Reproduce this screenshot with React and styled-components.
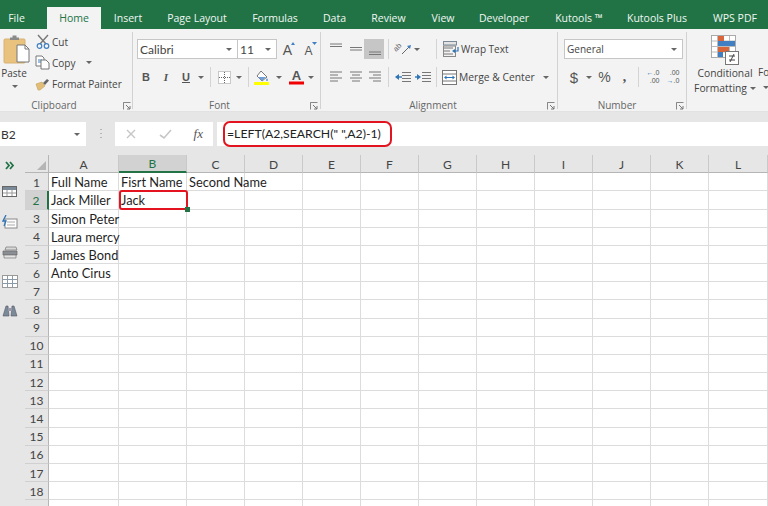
import React from "react";
import styled, { createGlobalStyle } from "styled-components";

const Global = createGlobalStyle`
  html, body { margin: 0; padding: 0; background: #fff; }
  body { font-family: "Open Sans", "Liberation Sans", sans-serif; }
  #root { width: 768px; height: 506px; overflow: hidden; }
`;
const Page = styled.div`width:768px;height:506px;overflow:hidden;display:flex;flex-direction:column;background:#e6e6e6;`;

const TabBar = styled.nav`height:29px;background:#217346;display:flex;align-items:flex-end;flex:none;overflow:hidden;`;
const Tab = styled.div`
  height:22px;line-height:22px;font-size:10.5px;white-space:nowrap;text-align:center;flex:none;
  width:${p=>p.$w}px;margin-left:${p=>p.$ml??0}px;color:${p=>p.$active?"#217346":"#f1f7f3"};background:${p=>p.$active?"#f3f3f3":"transparent"};
`;

const Ribbon = styled.section`height:83px;flex:none;background:#f3f3f3;display:flex;padding-top:3px;box-sizing:border-box;border-bottom:1px solid #e2e2e2;`;
const Group = styled.div`position:relative;flex:none;width:${p=>p.$w}px;height:77px;box-sizing:border-box;display:flex;flex-direction:column;border-right:${p=>p.$last?"none":"1px solid #d2d2d2"};`;
const StylesGroup = styled(Group)`flex-direction:row;`;
const GroupBody = styled.div`flex:1;display:flex;flex-direction:column;gap:8px;padding-top:7px;padding-left:${p=>p.$left??0}px;`;
const GroupLabel = styled.div`height:13px;line-height:13px;margin-bottom:-3px;padding-right:${p=>p.$pr??0}px;font-size:10px;color:#666;text-align:center;`;
const Launcher = styled.svg`position:absolute;right:${p=>p.$r??1}px;bottom:-1px;width:8px;height:8px;`;
const Row = styled.div`display:flex;align-items:center;height:20px;flex:none;margin-left:${p=>p.$ml??0}px;`;
const Cell = styled.div`flex:none;display:flex;align-items:center;justify-content:center;height:20px;width:${p=>p.$w}px;margin-left:${p=>p.$ml??0}px;background:${p=>p.$on?"#c6c6c6":"transparent"};`;
const Glyph = styled(Cell)`color:#555;font-family:${p=>p.$serif?'"Liberation Serif",serif':'"Liberation Sans",sans-serif'};font-size:${p=>p.$size??11}px;font-weight:${p=>p.$bold?"bold":"normal"};font-style:${p=>p.$italic?"italic":"normal"};text-decoration:${p=>p.$under?"underline":"none"};`;
const Sep = styled.div`flex:none;width:1px;height:20px;background:#d4d4d4;margin:0 ${p=>p.$m??4}px;`;
const Combo = styled.div`flex:none;box-sizing:border-box;width:${p=>p.$w}px;height:20px;background:#fff;border:1px solid #c6c6c6;margin-left:${p=>p.$join?"-1px":"0"};display:flex;align-items:center;justify-content:space-between;padding:0 5px 0 2px;font-size:${p=>p.$cal?"12px":"10px"};font-family:${p=>p.$cal?'Lato,"Open Sans",sans-serif':'"Open Sans",sans-serif'};color:#444;`;
const Caret = styled.i`display:inline-block;flex:none;width:0;height:0;border-left:3px solid transparent;border-right:3px solid transparent;border-top:3px solid #666;margin-left:${p=>p.$ml??0}px;`;
const ToolText = styled.span`font-size:10px;color:#444;white-space:nowrap;margin-left:${p=>p.$ml??0}px;`;
const MergeText = styled(ToolText)`font-size:10.3px;`;

const Clip = styled.div`display:flex;flex:1;`;
const PasteCol = styled.div`width:33px;flex:none;display:flex;flex-direction:column;align-items:center;padding-top:3px;box-sizing:border-box;`;
const PasteText = styled.span`font-size:10px;color:#444;margin-top:2px;line-height:14px;margin-left:-5px;`;
const PasteCaret = styled(Caret)`margin-top:5px;margin-left:-4px;`;
const ClipTools = styled.div`display:flex;flex-direction:column;padding-left:2px;margin-top:-1px;`;
const ClipTool = styled.div`height:21px;display:flex;align-items:center;gap:2px;`;
const IconSlot = styled.div`width:15px;display:flex;justify-content:center;flex:none;`;

const BigCol = styled.div`width:66px;margin-left:5px;flex:none;display:flex;flex-direction:column;align-items:center;padding-top:3px;`;
const BigText = styled.div`font-size:10.3px;line-height:15px;color:#444;white-space:nowrap;display:flex;align-items:center;gap:3px;`;
const Cond = styled.div`margin-top:1px;display:flex;flex-direction:column;align-items:center;`;
const Clipped = styled.div`padding-top:33px;font-size:10px;line-height:15px;color:#444;display:flex;flex-direction:column;align-items:flex-end;`;
const ClippedCaret = styled(Caret)`margin-top:6px;`;

const FormulaBar = styled.section`height:43px;flex:none;background:#e6e6e6;display:flex;align-items:flex-start;padding-top:10px;box-sizing:border-box;`;
const NameBox = styled.div`width:86px;height:24px;background:#fff;box-sizing:border-box;display:flex;align-items:center;justify-content:space-between;padding:0 6px 0 1px;font:12px Lato,sans-serif;color:#333;flex:none;`;
const Dots = styled.div`width:29px;height:24px;display:flex;justify-content:center;align-items:center;flex:none;`;
const FxBox = styled.div`width:98px;height:24px;background:#fff;flex:none;display:flex;align-items:center;justify-content:space-between;padding:0 10px;box-sizing:border-box;`;
const FxMark = styled.span`font:italic 13px "Liberation Serif",serif;color:#555;`;
const FormulaInput = styled.div`position:relative;flex:1;margin-left:4px;height:24px;background:#fff;font:12.25px/24px Lato,sans-serif;color:#222;padding-left:10px;white-space:pre;`;
const Callout = styled.div`position:absolute;box-sizing:border-box;border:2px solid #e3141f;border-radius:${p=>p.$r}px;left:${p=>p.$x}px;top:${p=>p.$y}px;width:${p=>p.$w}px;height:${p=>p.$h}px;pointer-events:none;`;

const Main = styled.main`flex:1;display:flex;min-height:0;background:#fff;`;
const Side = styled.aside`width:25px;flex:none;background:#e6e6e6;display:flex;flex-direction:column;padding-left:1px;box-sizing:border-box;`;
const SideIcon = styled.div`height:${p=>p.$h}px;width:18px;display:flex;align-items:center;justify-content:center;flex:none;`;
const Sheet = styled.div`position:relative;flex:1;background:#fff;display:grid;grid-template-columns:24px 70px 68px 58px 58px 58px 58px 58px 58px 58px 58px 58px 59px;grid-auto-rows:18.18px;align-content:start;overflow:hidden;`;
const ColHead = styled.div`background:${p=>p.$on?"#d2d2d2":"#e6e6e6"};color:${p=>p.$on?"#217346":"#444"};border-right:1px solid #c9c9c9;border-bottom:${p=>p.$on?"2px solid #217346":"1px solid #b5b5b5"};box-sizing:border-box;padding-top:1px;font:12px Lato,sans-serif;display:flex;align-items:center;justify-content:center;`;
const Corner = styled.div`background:#e6e6e6;border-right:1px solid #b5b5b5;border-bottom:1px solid #b5b5b5;box-sizing:border-box;display:flex;align-items:flex-end;justify-content:flex-end;padding:0 2px 2px 0;`;
const RowHead = styled.div`background:${p=>p.$on?"#d2d2d2":"#e6e6e6"};color:${p=>p.$on?"#217346":"#444"};border-right:${p=>p.$on?"2px solid #217346":"1px solid #b5b5b5"};border-bottom:1px solid #d0d0d0;box-sizing:border-box;padding-top:1px;font:12px Lato,sans-serif;display:flex;align-items:center;justify-content:center;`;
const SheetCell = styled.div`border-right:1px solid #dcdcdc;border-bottom:1px solid #dcdcdc;box-sizing:border-box;font:12.8px Lato,sans-serif;color:#1f1f1f;padding:1px 0 0 2px;display:flex;align-items:center;white-space:nowrap;overflow:visible;`;
const Handle = styled.div`position:absolute;left:160px;top:52px;width:5px;height:5px;background:#217346;`;
const DecStack = styled.span`display:flex;flex-direction:column;align-items:flex-end;font:7px/8.2px "Liberation Sans",sans-serif;color:#555;`;
const DecArrow = styled.b`color:#2e75b6;`;
const DecLine = styled.span`display:block;`;

const Ic = ({w=14,h=14,children}) => <svg width={w} height={h} viewBox={`0 0 ${w} ${h}`} style={{display:"block",flex:"none"}}>{children}</svg>;
const Lines = ({rows}) => <Ic w={16} h={14}>{rows.map((r,i)=><path key={i} d={`M${r[0]} ${r[2]}H${r[1]}`} stroke="#777" strokeWidth="1"/>)}</Ic>;
const LaunchIcon = ({r}) => <Launcher $r={r} viewBox="0 0 8 8"><path d="M.5 3V.5H7.5M.5 .5V7.5" fill="none" stroke="#888"/><path d="M3 3L7 7M7 4V7H4" fill="none" stroke="#777"/></Launcher>;

const tabs=[["File",33,0],["Home",54,14],["Insert",54,0],["Page Layout",84,0],["Formulas",72,0],["Data",47,0],["Review",61,0],["View",48,0],["Developer",74,0],["Kutools ™",76,0],["Kutools Plus",80,0],["WPS PDF",76,0]];
const cols=["A","B","C","D","E","F","G","H","I","J","K","L"];
const data={1:["Full Name","Fisrt Name","Second Name"],2:["Jack Miller","Jack"],3:["Simon Peter"],4:["Laura mercy"],5:["James Bond"],6:["Anto Cirus"]};

const PasteIcon=()=><Ic w={27} h={29}><rect x="1" y="4" width="21" height="24" rx="1" fill="#e9c27e" stroke="#d6b273"/><path d="M7 5V2.5H9.5V0.5H13.5V2.5H16V5z" fill="#8a8a8a"/><path d="M14 10H22L26 14V27H14z" fill="#fff" stroke="#777"/><path d="M22 10V14H26" fill="none" stroke="#777"/></Ic>;
const CutIcon=()=><Ic w={14} h={15}><path d="M2 1L10 10M12 1L4 10" stroke="#777" strokeWidth="1.4"/><circle cx="3.5" cy="12" r="2.3" fill="none" stroke="#3f7fc2" strokeWidth="1.2"/><circle cx="10.5" cy="12" r="2.3" fill="none" stroke="#3f7fc2" strokeWidth="1.2"/></Ic>;
const CopyIcon=()=><Ic w={15} h={15}><path d="M1 1H7L9 3V11H1z" fill="#fff" stroke="#777"/><path d="M3 5H7M3 7H7" stroke="#3f7fc2"/><path d="M6 5H11L14 8V14H6z" fill="#fff" stroke="#777"/></Ic>;
const BrushIcon=()=><Ic w={15} h={14}><path d="M1 7L7 5L10 9L5 13H3z" fill="#e2bd78" stroke="#c69f5c" strokeWidth=".6"/><path d="M8 6L12 2L14 3.5L10 8z" fill="#666"/></Ic>;
const BorderIcon=()=><Ic w={13} h={13}><rect x=".5" y=".5" width="12" height="12" fill="#fff" stroke="#999" strokeDasharray="1 1"/><path d="M6.5 1V12M1 6.5H12" stroke="#666" strokeDasharray="1 1"/></Ic>;
const FillIcon=()=><Ic w={15} h={15}><path d="M7 1L13 7L8 11L3 6z" fill="#fff" stroke="#777"/><path d="M4 7H12L8 11z" fill="#6f9fd4"/><path d="M13 8c1 2 1 3 0 3s-1-1 0-3z" fill="#3f7fc2"/><rect x="0" y="12" width="15" height="3" fill="#ffff00"/></Ic>;
const FontColor=()=><Ic w={15} h={16}><text x="7.5" y="11" textAnchor="middle" fontFamily="Liberation Sans" fontWeight="bold" fontSize="13" fill="#555">A</text><rect x="0" y="12.5" width="15" height="3" fill="#f00000"/></Ic>;
const Grow=({up})=><Ic w={14} h={16}><text x="5.5" y="14" textAnchor="middle" fontFamily="Liberation Sans" fontSize={up?14:12} fill="#555">A</text><path d={up?"M9 4L11 1L13 4z":"M9 1H14L11.5 4z"} fill="#3f7fc2"/></Ic>;
const Orient=()=><Ic w={18} h={18}><text x="0" y="0" transform="translate(2,12) rotate(-45)" fontFamily="Liberation Sans" fontSize="7.5" fill="#666">ab</text><path d="M8 14L15 7" stroke="#666"/><path d="M13 6L17 5L16 9z" fill="#3f7fc2"/></Ic>;
const Indent=({dir})=><Ic w={16} h={12}><path d="M7 1.5H16M7 4.5H16M7 7.5H16M7 10.5H16" stroke="#777"/><path d={dir<0?"M0 6L4 3V9z":"M6 6L2 3V9z"} fill="#2e75b6"/><path d={dir<0?"M3 6H7":"M0 6H3"} stroke="#2e75b6" strokeWidth="1.4"/></Ic>;
const Wrap=()=><Ic w={18} h={16}><rect x=".5" y=".5" width="13" height="3.5" fill="#e3e3e3" stroke="#7a8a99"/><path d="M1 7H10M1 10H7M1 13H10" stroke="#777"/><rect x=".5" y="5" width="12" height="10.5" fill="none" stroke="#888"/><path d="M11 10H15V6" fill="none" stroke="#2e75b6" strokeWidth="1.2"/><path d="M9 10L12 8V12z" fill="#2e75b6"/></Ic>;
const Merge=()=><Ic w={15} h={15}><rect x=".5" y=".5" width="14" height="14" fill="#fff" stroke="#777"/><path d="M1 4H14M1 11H14" stroke="#777"/><path d="M3 7.5H12" stroke="#2e75b6"/><path d="M2 7.5L4.5 5.5V9.5zM13 7.5L10.5 5.5V9.5z" fill="#2e75b6"/></Ic>;
const CF=()=><Ic w={28} h={30}><rect x=".5" y=".5" width="24" height="22" fill="#fff" stroke="#aaa"/><path d="M6.5 1V23M18.5 1V23M1 6H24M1 11.5H24M1 17H24" stroke="#bbb"/><rect x="7" y="1" width="6" height="5" fill="#d9653b"/><rect x="7" y="6" width="17" height="5" fill="#3f7fc2"/><rect x="7" y="12" width="11" height="5" fill="#d9653b"/><rect x="7" y="17" width="5" height="5" fill="#3f7fc2"/><rect x="14.5" y="16.5" width="13" height="13" fill="#fff" stroke="#777"/><path d="M18 21H24M18 25H24M23 19L19 27" stroke="#444" fill="none"/></Ic>;

export default function App(){
  return <Page><Global/>
    <TabBar>
      {tabs.map(([t,w,ml],i)=><Tab key={t} $w={w} $ml={ml} $active={i===1}>{t}</Tab>)}
    </TabBar>
    <Ribbon>
      <Group $w={133}>
        <Clip>
          <PasteCol><PasteIcon/><PasteText>Paste</PasteText><PasteCaret/></PasteCol>
          <ClipTools>
            <ClipTool><IconSlot><CutIcon/></IconSlot><ToolText>Cut</ToolText></ClipTool>
            <ClipTool><IconSlot><CopyIcon/></IconSlot><ToolText>Copy</ToolText><Caret $ml={9}/></ClipTool>
            <ClipTool><IconSlot><BrushIcon/></IconSlot><ToolText>Format Painter</ToolText></ClipTool>
          </ClipTools>
        </Clip>
        <GroupLabel $pr={24}>Clipboard</GroupLabel><LaunchIcon/>
      </Group>
      <Group $w={188}>
        <GroupBody $left={4}>
          <Row>
            <Combo $w={101} $cal>Calibri<Caret/></Combo>
            <Combo $w={40} $join $cal>11<Caret/></Combo>
            <Cell $w={20} $ml={2}><Grow up/></Cell><Cell $w={21}><Grow/></Cell>
          </Row>
          <Row $ml={-1}>
            <Glyph $w={20} $bold>B</Glyph>
            <Glyph $w={20} $serif $bold $italic>I</Glyph>
            <Glyph $w={20} $bold $under>U</Glyph>
            <Cell $w={10}><Caret/></Cell>
            <Sep/>
            <Cell $w={18}><BorderIcon/></Cell>
            <Cell $w={11}><Caret/></Cell>
            <Sep/>
            <Cell $w={16}><FillIcon/></Cell>
            <Cell $w={19}><Caret/></Cell>
            <Cell $w={16}><FontColor/></Cell>
            <Cell $w={13}><Caret/></Cell>
          </Row>
        </GroupBody>
        <GroupLabel $pr={14}>Font</GroupLabel><LaunchIcon r={2}/>
      </Group>
      <Group $w={237}>
        <GroupBody $left={4}>
          <Row>
            <Cell $w={20}><Lines rows={[[3,15,2],[3,15,4.5]]}/></Cell>
            <Cell $w={19}><Lines rows={[[3,15,5.5],[3,15,8]]}/></Cell>
            <Cell $w={20} $on><Lines rows={[[3,15,10],[3,15,12.5]]}/></Cell>
            <Sep/>
            <Cell $w={20}><Orient/></Cell>
            <Cell $w={8}><Caret/></Cell>
            <Sep $m={15}/>
            <Cell $w={17} $ml={-9}><Wrap/></Cell>
            <ToolText $ml={1}>Wrap Text</ToolText>
          </Row>
          <Row>
            <Cell $w={20}><Lines rows={[[3,15,2],[3,11,5],[3,15,8],[3,11,11]]}/></Cell>
            <Cell $w={19}><Lines rows={[[3,15,2],[5,13,5],[3,15,8],[5,13,11]]}/></Cell>
            <Cell $w={20}><Lines rows={[[3,15,2],[7,15,5],[3,15,8],[7,15,11]]}/></Cell>
            <Sep/>
            <Cell $w={20}><Indent dir={-1}/></Cell>
            <Cell $w={20}><Indent dir={1}/></Cell>
            <Sep $m={3}/>
            <Cell $w={17} $ml={1}><Merge/></Cell>
            <MergeText $ml={1}>Merge &amp; Center</MergeText>
            <Caret $ml={8}/>
          </Row>
        </GroupBody>
        <GroupLabel $pr={12}>Alignment</GroupLabel><LaunchIcon r={2}/>
      </Group>
      <Group $w={129}>
        <GroupBody $left={6}>
          <Row><Combo $w={119}>General<Caret/></Combo></Row>
          <Row>
            <Glyph $w={20} $size={15}>$</Glyph>
            <Cell $w={10}><Caret/></Cell>
            <Glyph $w={21} $size={14}>%</Glyph>
            <Glyph $w={19} $size={14} $serif $bold>,</Glyph>
            <Sep/>
            <Cell $w={20}><DecStack><DecLine><DecArrow>←</DecArrow>.0</DecLine><DecLine>.00</DecLine></DecStack></Cell>
            <Cell $w={20}><DecStack><DecLine>.00</DecLine><DecLine><DecArrow>→</DecArrow>.0</DecLine></DecStack></Cell>
          </Row>
        </GroupBody>
        <GroupLabel $pr={10}>Number</GroupLabel><LaunchIcon r={2}/>
      </Group>
      <StylesGroup $w={81} $last>
        <BigCol><CF/><Cond><BigText>Conditional</BigText><BigText>Formatting<Caret/></BigText></Cond></BigCol>
        <Clipped>Fo<ClippedCaret/></Clipped>
      </StylesGroup>
    </Ribbon>
    <FormulaBar>
      <NameBox>B2<Caret/></NameBox>
      <Dots><Ic w={2} h={12}><path d="M1 1V2M1 5V6M1 9V10" stroke="#aaa" strokeWidth="1.6"/></Ic></Dots>
      <FxBox>
        <Ic w={12} h={12}><path d="M2 2L10 10M10 2L2 10" stroke="#c6c6c6" strokeWidth="1.4"/></Ic>
        <Ic w={13} h={12}><path d="M1 7L5 10L12 2" fill="none" stroke="#c6c6c6" strokeWidth="1.6"/></Ic>
        <FxMark>fx</FxMark>
      </FxBox>
      <FormulaInput>{'=LEFT(A2,SEARCH(" ",A2)-1)'}<Callout $x={6} $y={-1} $w={169} $h={26} $r={7}/></FormulaInput>
    </FormulaBar>
    <Main>
      <Side>
        <SideIcon $h={20}><Ic w={10} h={9}><path d="M1 1L4 4.5L1 8M5 1L8 4.5L5 8" fill="none" stroke="#217346" strokeWidth="1.8"/></Ic></SideIcon>
        <SideIcon $h={34}><Ic w={16} h={13}><rect x=".5" y=".5" width="14" height="10" fill="#fff" stroke="#666"/><rect x="1" y="1" width="13" height="3" fill="#7a8a99"/><path d="M5 4V10M10 4V10M1 7H14" stroke="#999"/></Ic></SideIcon>
        <SideIcon $h={26}><Ic w={16} h={14}><rect x="3" y="4" width="12" height="9" fill="#fff" stroke="#888"/><path d="M5 7H13M5 10H13" stroke="#aaa"/><path d="M4 0L1 6H4L2 11" fill="none" stroke="#2e75b6" strokeWidth="1.3"/></Ic></SideIcon>
        <SideIcon $h={34}><Ic w={16} h={13}><path d="M4 1H14L15 4H3z" fill="#d8d8d8" stroke="#777" strokeWidth=".7"/><path d="M1 5H15V9H1z" fill="#8b8f95" stroke="#666" strokeWidth=".7"/><path d="M2 9H14V12H2z" fill="#e4e4e4" stroke="#777" strokeWidth=".7"/></Ic></SideIcon>
        <SideIcon $h={24}><Ic w={16} h={13}><rect x=".5" y=".5" width="15" height="12" fill="#fff" stroke="#999"/><path d="M5.5 1V12M10.5 1V12M1 4.5H15M1 8.5H15" stroke="#8a9aa9"/></Ic></SideIcon>
        <SideIcon $h={34}><Ic w={16} h={13}><path d="M1 12L4 2H6L7 12zM9 12L10 2H12L15 12z" fill="#7a8a99" stroke="#556" strokeWidth=".6"/><rect x="6" y="4" width="4" height="3" fill="#99a"/></Ic></SideIcon>
      </Side>
      <Sheet>
        <Corner><Ic w={9} h={9}><path d="M9 0V9H0z" fill="#b5b5b5"/></Ic></Corner>
        {cols.map(c=><ColHead key={c} $on={c==="B"}>{c}</ColHead>)}
        {Array.from({length:19},(_,i)=>i+1).map(r=><React.Fragment key={r}>
          <RowHead $on={r===2}>{r<19?r:""}</RowHead>
          {cols.map((c,ci)=><SheetCell key={c}>{(data[r]||[])[ci]||""}</SheetCell>)}
        </React.Fragment>)}
        <Callout $x={94} $y={35} $w={69} $h={20} $r={3}/>
        <Handle/>
      </Sheet>
    </Main>
  </Page>;
}
